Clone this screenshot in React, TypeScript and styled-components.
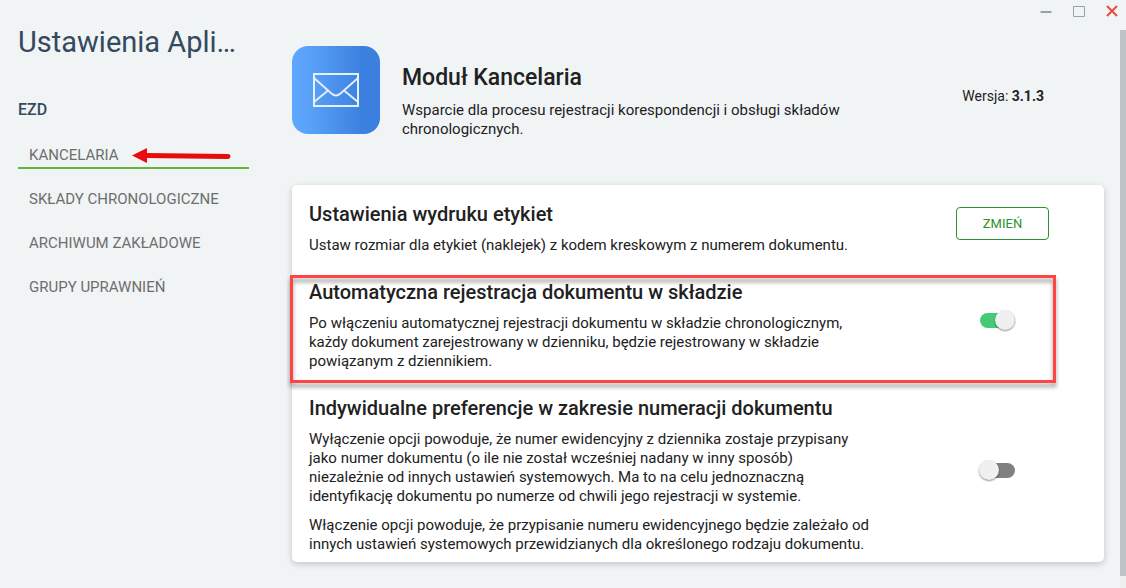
import React, { useState } from "react";
import styled, { createGlobalStyle } from "styled-components";

const GlobalStyle = createGlobalStyle`
  *, *::before, *::after { box-sizing: border-box; }
  body {
    margin: 0;
    background: #f0f4f5;
    color: #212121;
    font-family: Roboto, "Liberation Sans", sans-serif;
    font-size: 15px;
    line-height: 19px;
  }
  h1, h2, h3, p, ul { margin: 0; padding: 0; }
`;

const Shell = styled.div`
  display: flex;
  min-height: 100vh;
`;

const Sidebar = styled.aside`
  flex: 0 0 249px;
  min-width: 0;
  padding: 24px 0 24px 18px;
  color: #34495e;
`;

const AppTitle = styled.h1`
  overflow: hidden;
  white-space: nowrap;
  text-overflow: ellipsis;
  font-size: 29px;
  line-height: 36px;
  font-weight: 400;
`;

const GroupTitle = styled.h2`
  margin: 40px 0 5px;
  font-size: 16px;
  line-height: 20px;
  font-weight: 500;
`;

const NavList = styled.ul`
  list-style: none;
`;

const NavItem = styled.li`
  position: relative;
`;

const NavLink = styled.a<{ $active?: boolean }>`
  display: block;
  padding: 20px 11px 2px;
  border-bottom: 2px solid ${(p) => (p.$active ? "#5fb83c" : "transparent")};
  color: #6e6e6e;
  font-size: 15px;
  line-height: 20px;
  white-space: nowrap;
  text-decoration: none;
`;

const Pointer = styled.svg`
  position: absolute;
  top: 21px;
  left: 113px;
`;

const Workspace = styled.div`
  flex: 1;
  min-width: 0;
  display: flex;
  flex-direction: column;
`;

const WindowBar = styled.div`
  display: flex;
  justify-content: flex-end;
  gap: 5px;
  height: 30px;
`;

const WindowButton = styled.button`
  display: grid;
  place-items: center;
  width: 28px;
  height: 22px;
  padding: 0;
  border: 0;
  background: none;
`;

const ScrollArea = styled.div`
  flex: 1;
  display: flex;
`;

const Content = styled.main`
  flex: 1;
  min-width: 0;
  padding: 16px 16px 26px 43px;
`;

const ScrollTrack = styled.div`
  flex: 0 0 6px;
  display: flex;
  padding-bottom: 12px;
  background: #f0f0f0;
`;

const ScrollThumb = styled.div`
  flex: 1;
  background: #bdc3c7;
`;

const ModuleHeader = styled.header`
  display: flex;
  gap: 22px;
  margin-bottom: 46px;
  padding-right: 60px;
`;

const ModuleIcon = styled.div`
  flex: 0 0 88px;
  display: grid;
  place-items: center;
  height: 88px;
  border-radius: 16px;
  background: linear-gradient(90deg, #5fa8ff 0%, #5aa2f8 20%, #3b80df 80%, #3b80df 100%);
`;

const ModuleInfo = styled.div`
  flex: 1;
  padding-top: 18px;
`;

const ModuleTitle = styled.h2`
  margin-bottom: 9px;
  font-size: 23px;
  line-height: 28px;
  font-weight: 500;
`;

const ModuleText = styled.p`
  max-width: 460px;
`;

const Version = styled.p`
  padding-top: 41px;
  font-size: 14px;
`;

const Card = styled.section`
  display: flex;
  flex-direction: column;
  gap: 25px;
  padding: 17px 16px 8px 17px;
  border-radius: 5px;
  background: #fff;
  box-shadow: 0 2px 6px rgba(0, 0, 0, 0.2);
`;

const Setting = styled.div<{ $highlighted?: boolean }>`
  position: relative;
  display: flex;
  justify-content: space-between;

  &::after {
    content: "";
    display: ${(p) => (p.$highlighted ? "block" : "none")};
    position: absolute;
    inset: -5px 32px -12px -19px;
    border: 3px solid #ff4444;
    filter: drop-shadow(0 4px 2px rgba(0, 0, 0, 0.4));
    pointer-events: none;
  }
`;

const SettingInfo = styled.div`
  display: flex;
  flex-direction: column;
  gap: 10px;
  max-width: 561px;
`;

const SettingTitle = styled.h3`
  font-size: 20px;
  line-height: 24px;
  font-weight: 500;
`;

const SettingControl = styled.div<{ $indented?: boolean }>`
  flex: 0 0 132px;
  display: flex;
  align-items: center;
  padding-bottom: 10px;
  padding-left: ${(p) => (p.$indented ? "24px" : "0")};
`;

const OutlineButton = styled.button`
  width: 93px;
  height: 33px;
  border: 1px solid #2a922a;
  border-radius: 4px;
  background: #fff;
  color: #2a922a;
  font: 400 13px/19px Roboto, "Liberation Sans", sans-serif;
`;

const Switch = styled.input`
  appearance: none;
  position: relative;
  width: 35px;
  height: 15px;
  margin: 0;
  border-radius: 8px;
  background: #808080;

  &::before {
    content: "";
    position: absolute;
    top: -3px;
    left: -1px;
    width: 20px;
    height: 20px;
    border-radius: 50%;
    background: #f0f0f0;
    box-shadow: 0 1px 2px rgba(0, 0, 0, 0.45);
  }

  &:checked { background: #48c978; }
  &:checked::before { left: 15px; }
`;

const sections = [
  "KANCELARIA",
  "SKŁADY CHRONOLOGICZNE",
  "ARCHIWUM ZAKŁADOWE",
  "GRUPY UPRAWNIEŃ",
];

type ToggleSettingProps = {
  id: string;
  title: string;
  paragraphs: string[];
  initial: boolean;
  highlighted?: boolean;
};

function ToggleSetting({ id, title, paragraphs, initial, highlighted }: ToggleSettingProps) {
  const [on, setOn] = useState(initial);
  return (
    <Setting $highlighted={highlighted}>
      <SettingInfo>
        <SettingTitle>
          <label htmlFor={id}>{title}</label>
        </SettingTitle>
        {paragraphs.map((text) => (
          <p key={text}>{text}</p>
        ))}
      </SettingInfo>
      <SettingControl $indented>
        <Switch
          id={id}
          type="checkbox"
          role="switch"
          checked={on}
          onChange={(e) => setOn(e.target.checked)}
        />
      </SettingControl>
    </Setting>
  );
}

export default function App() {
  return (
    <>
      <GlobalStyle />
      <Shell>
        <Sidebar>
          <AppTitle>Ustawienia Aplikacji</AppTitle>
          <GroupTitle>EZD</GroupTitle>
          <nav>
            <NavList>
              {sections.map((name, i) => (
                <NavItem key={name}>
                  <NavLink href="#" $active={i === 0}>
                    {name}
                  </NavLink>
                  {i === 0 && (
                    <Pointer width="101" height="18" viewBox="0 0 101 18" aria-hidden="true">
                      <path d="M14 9.5L97 10.5" stroke="#e90c0c" strokeWidth="5" strokeLinecap="round" />
                      <path d="M1 9.500L16 2V17Z" fill="#e90c0c" />
                    </Pointer>
                  )}
                </NavItem>
              ))}
            </NavList>
          </nav>
        </Sidebar>
        <Workspace>
          <WindowBar>
            <WindowButton aria-label="Minimalizuj">
              <svg width="12" height="12" viewBox="0 0 12 12">
                <path d="M0.500 7H11.500" stroke="#95a5a6" strokeWidth="2" />
              </svg>
            </WindowButton>
            <WindowButton aria-label="Maksymalizuj">
              <svg width="12" height="12" viewBox="0 0 12 12">
                <path d="M0.500 1.500H11.500V11.500H0.500Z" fill="none" stroke="#95a5a6" />
              </svg>
            </WindowButton>
            <WindowButton aria-label="Zamknij">
              <svg width="12" height="12" viewBox="0 0 12 12">
                <path d="M1 1L11 11M11 1L1 11" stroke="#e74c3c" strokeWidth="2" />
              </svg>
            </WindowButton>
          </WindowBar>
          <ScrollArea>
            <Content>
              <ModuleHeader>
                <ModuleIcon>
                  <svg width="48" height="36" viewBox="0 0 48 36" fill="none" stroke="#e6f0fd">
                    <rect x="2" y="2" width="44" height="32" strokeWidth="2" />
                    <path
                      d="M2 6L19.500 21.500Q24 25.500 28.500 21.500L46 6M2 30L16 18.500M46 30L32 18.500"
                      strokeWidth="1.8"
                    />
                  </svg>
                </ModuleIcon>
                <ModuleInfo>
                  <ModuleTitle>Moduł Kancelaria</ModuleTitle>
                  <ModuleText>
                    Wsparcie dla procesu rejestracji korespondencji i obsługi składów chronologicznych.
                  </ModuleText>
                </ModuleInfo>
                <Version>
                  Wersja: <strong>3.1.3</strong>
                </Version>
              </ModuleHeader>
              <Card>
                <Setting>
                  <SettingInfo>
                    <SettingTitle>Ustawienia wydruku etykiet</SettingTitle>
                    <p>Ustaw rozmiar dla etykiet (naklejek) z kodem kreskowym z numerem dokumentu.</p>
                  </SettingInfo>
                  <SettingControl>
                    <OutlineButton type="button">ZMIEŃ</OutlineButton>
                  </SettingControl>
                </Setting>
                <ToggleSetting
                  id="auto-registration"
                  title="Automatyczna rejestracja dokumentu w składzie"
                  paragraphs={[
                    "Po włączeniu automatycznej rejestracji dokumentu w składzie chronologicznym, każdy dokument zarejestrowany w dzienniku, będzie rejestrowany w składzie powiązanym z dziennikiem.",
                  ]}
                  initial={true}
                  highlighted
                />
                <ToggleSetting
                  id="numbering"
                  title="Indywidualne preferencje w zakresie numeracji dokumentu"
                  paragraphs={[
                    "Wyłączenie opcji powoduje, że numer ewidencyjny z dziennika zostaje przypisany jako numer dokumentu (o ile nie został wcześniej nadany w inny sposób) niezależnie od innych ustawień systemowych. Ma to na celu jednoznaczną identyfikację dokumentu po numerze od chwili jego rejestracji w systemie.",
                    "Włączenie opcji powoduje, że przypisanie numeru ewidencyjnego będzie zależało od innych ustawień systemowych przewidzianych dla określonego rodzaju dokumentu.",
                  ]}
                  initial={false}
                />
              </Card>
            </Content>
            <ScrollTrack>
              <ScrollThumb />
            </ScrollTrack>
          </ScrollArea>
        </Workspace>
      </Shell>
    </>
  );
}
